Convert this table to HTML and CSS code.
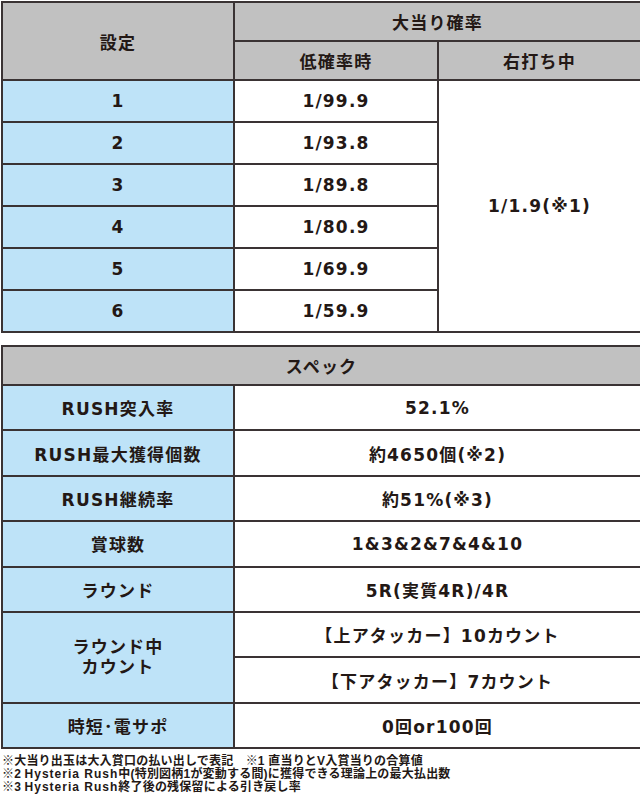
FILE: index.html
```html
<!DOCTYPE html>
<html lang="ja">
<head>
<meta charset="utf-8">
<link rel="stylesheet" href="styles.css">
</head>
<body>
<table class="tbl t1">
  <colgroup><col class="c1"><col class="c2"><col class="c3"></colgroup>
  <tr class="h1"><th rowspan="2">設定</th><th colspan="2">大当り確率</th></tr>
  <tr class="h2"><th>低確率時</th><th>右打ち中</th></tr>
  <tr class="r"><td class="lab">1</td><td>1/99.9</td><td rowspan="6">1/1.9(※1)</td></tr>
  <tr class="r"><td class="lab">2</td><td>1/93.8</td></tr>
  <tr class="r"><td class="lab">3</td><td>1/89.8</td></tr>
  <tr class="r"><td class="lab">4</td><td>1/80.9</td></tr>
  <tr class="r"><td class="lab">5</td><td>1/69.9</td></tr>
  <tr class="r"><td class="lab">6</td><td>1/59.9</td></tr>
</table>
<table class="tbl t2">
  <colgroup><col class="c1"><col class="c4"></colgroup>
  <tr class="h3"><th colspan="2">スペック</th></tr>
  <tr class="s"><td class="lab">RUSH突入率</td><td>52.1%</td></tr>
  <tr class="s"><td class="lab">RUSH最大獲得個数</td><td>約4650個(※2)</td></tr>
  <tr class="s"><td class="lab">RUSH継続率</td><td>約51%(※3)</td></tr>
  <tr class="s"><td class="lab">賞球数</td><td>1&amp;3&amp;2&amp;7&amp;4&amp;10</td></tr>
  <tr class="s"><td class="lab">ラウンド</td><td>5R(実質4R)/4R</td></tr>
  <tr class="s"><td class="lab two" rowspan="2">ラウンド中<br>カウント</td><td>【上アタッカー】10カウント</td></tr>
  <tr class="s"><td>【下アタッカー】7カウント</td></tr>
  <tr class="s"><td class="lab">時短･電サポ</td><td>0回or100回</td></tr>
</table>
<div class="notes">
  <p>※大当り出玉は大入賞口の払い出しで表記　※1 直当りとV入賞当りの合算値</p>
  <p>※2 <span class="lat">Hysteria Rush</span>中(特別図柄1が変動する間)に獲得できる理論上の最大払出数</p>
  <p>※3 <span class="lat">Hysteria Rush</span>終了後の残保留による引き戻し率</p>
</div>
</body>
</html>
```
FILE: styles.css
```css
html, body {
  margin: 0;
  padding: 0;
  background: #fff;
}
body {
  width: 640px;
  font-family: "DejaVu Sans", "Noto Sans CJK JP", sans-serif;
  font-weight: 700;
  color: #231815;
}
.tbl {
  border-collapse: collapse;
  width: 639px;
  table-layout: fixed;
  margin-left: 1px;
}
.tbl th, .tbl td {
  border: 2px solid #3a3334;
  text-align: center;
  vertical-align: middle;
  padding: 0;
  font-size: 17px;
  letter-spacing: 1.2px;
  background: #fff;
}
.tbl th {
  background: #c1c1c1;
}
.tbl td.lab {
  background: #bee3f8;
}
.tbl td.two {
  line-height: 20px;
}
.c1 { width: 232px; }
.c2 { width: 204px; }
.c3 { width: 203px; }
.c4 { width: 407px; }
.t1 { margin-top: 1px; }
.h1 { height: 39px; }
.h2 { height: 39px; }
.r { height: 42px; }
.t2 { margin-top: 12px; }
.h3 { height: 39px; }
.s { height: 45.4px; }
.notes {
  margin-top: 6px;
  padding-left: 2px;
  font-family: "Liberation Sans", "Noto Sans CJK JP", sans-serif;
  font-size: 12px;
  line-height: 13px;
  letter-spacing: 0.2px;
}
.notes p { margin: 0; height: 13px; white-space: nowrap; }
.notes .lat { letter-spacing: 1px; }
```
